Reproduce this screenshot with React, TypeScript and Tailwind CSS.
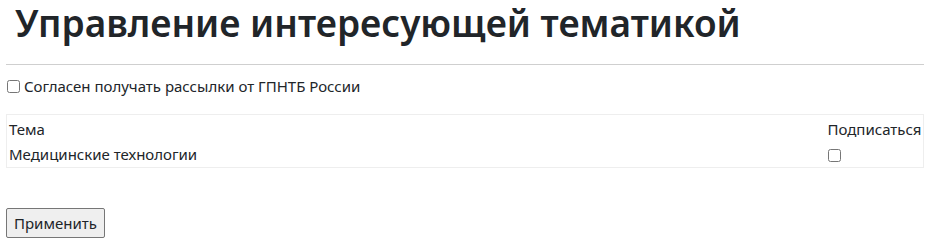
export default function App() {
  return (
    <div className="bg-white text-[#212529]" style={{ fontFamily: '"Noto Sans", sans-serif' }}>
      <div className="px-[6px]">
        <h1 className="pl-[9px] pt-[1px] text-[37px] font-semibold leading-[44px]">
          Управление интересующей тематикой
        </h1>
        <hr className="mt-[19px] border-t border-[#cfcfcf]" />
        <label className="mt-[11px] flex items-center gap-[4px] text-[15px] leading-[20px]">
          <input type="checkbox" className="ml-[1px] h-[13px] w-[13px]" />
          Согласен получать рассылки от ГПНТБ России
        </label>
        <table className="mt-[18px] w-full border border-[#eeeeee] text-[15px] leading-[25px]">
          <tbody>
            <tr>
              <td className="pl-[2px] pt-[2px]">Тема</td>
              <td className="w-[96px] pt-[2px]">Подписаться</td>
            </tr>
            <tr>
              <td className="pl-[2px]">Медицинские технологии</td>
              <td>
                <input type="checkbox" className="h-[13px] w-[13px] align-middle" />
              </td>
            </tr>
          </tbody>
        </table>
        <button className="mt-[40px] rounded-[2px] border border-[#767676] bg-[#efefef] px-[7px] py-[3px] text-[15px] leading-[22px]">
          Применить
        </button>
      </div>
    </div>
  );
}
